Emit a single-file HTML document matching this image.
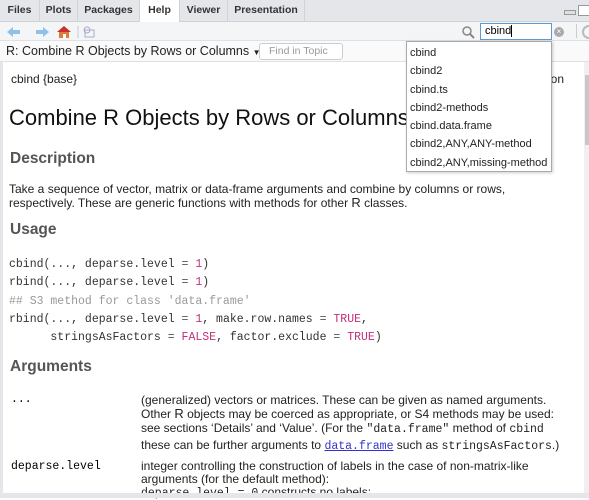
<!DOCTYPE html>
<html><head><meta charset="utf-8"><style>
*{margin:0;padding:0;box-sizing:border-box}
body{width:589px;height:498px;overflow:hidden;background:#fff;font-family:"Liberation Sans",sans-serif;position:relative;color:#000}
.a{position:absolute;white-space:nowrap}
.tabs{position:absolute;left:0;top:0;width:589px;height:22px;background:#e4e6e9;border-bottom:1px solid #cfd3d8}
.tab{position:absolute;top:0;height:22px;font-size:10.5px;font-weight:bold;line-height:21px;text-align:center;color:#333;border-right:1px solid #cfd3d8}
.tb{position:absolute;left:0;top:22px;width:589px;height:19px;background:#f4f5f7;border-bottom:1px solid #dde0e4}
.tt{position:absolute;left:0;top:41px;width:589px;height:21px;background:#fafafa;border-bottom:1px solid #dde0e4}
.m{font-family:"Liberation Mono",monospace;font-size:11.5px}
h3{position:absolute;left:10px;font-size:15.5px;color:#555;font-weight:bold}
.p{font-size:12px;line-height:14px;color:#222}
.n{color:#c0307a}.c{color:#999}.g{color:#555}
</style></head><body>
<div class="tabs">
<div class="tab" style="left:0;width:40px">Files</div>
<div class="tab" style="left:40px;width:38px">Plots</div>
<div class="tab" style="left:78px;width:62px">Packages</div>
<div class="tab" style="left:140px;width:40px;background:#fff;height:23px">Help</div>
<div class="tab" style="left:180px;width:48px">Viewer</div>
<div class="tab" style="left:228px;width:77px">Presentation</div>
<div class="a" style="left:564px;top:10px;width:12px;height:5px;border:1px solid #999;background:#e0e0e0"></div>
<div class="a" style="left:578px;top:5px;width:12px;height:11px;border:1px solid #999;background:#fff"></div>
</div>
<div class="tb">
<svg class="a" style="left:6px;top:3px" width="90" height="14">
<path d="M1 7 L7 2 L7 5 L14 5 L14 9 L7 9 L7 12Z" fill="#8fc1e8"/>
<path d="M43 7 L37 2 L37 5 L30 5 L30 9 L37 9 L37 12Z" fill="#8fc1e8"/>
<path d="M51 7 L58 1 L65 7 Z" fill="#c9302c"/><rect x="53" y="7" width="10" height="6" fill="#e27a3a"/><rect x="57" y="9" width="3" height="4" fill="#fff"/>
<line x1="72" y1="1" x2="72" y2="13" stroke="#ccc"/>
<rect x="79" y="5" width="9" height="7" fill="none" stroke="#aac"/><circle cx="81" cy="5" r="3" fill="none" stroke="#aac"/>
</svg>
<svg class="a" style="left:461px;top:3px" width="14" height="14"><circle cx="6" cy="6" r="4" fill="none" stroke="#888" stroke-width="1.5"/><line x1="9" y1="9" x2="13" y2="13" stroke="#888" stroke-width="2"/></svg>
<div class="a" style="left:480px;top:1px;width:72px;height:17px;border:1px solid #5b9bd5;background:#fff;font-size:11px;line-height:15px;padding-left:4px">cbind<span style="border-left:1px solid #000"></span></div>
<div class="a" style="left:554px;top:5px;width:10px;height:10px;border-radius:50%;background:#aaa;color:#fff;font-size:8px;line-height:10px;text-align:center">×</div>
<div class="a" style="left:576px;top:2px;width:1px;height:14px;background:#ccc"></div>
<div class="a" style="left:582px;top:3px;width:14px;height:14px;border-radius:50%;border:2px solid #bbb"></div>
</div>
<div class="tt">
<div class="a" style="left:6px;top:3px;font-size:12.5px;color:#222">R: Combine R Objects by Rows or Columns <span style="font-size:8px">▼</span></div>
<div class="a" style="left:259px;top:2px;width:84px;height:17px;border:1px solid #ccc;border-radius:3px;background:#fff;font-size:10.5px;color:#999;line-height:15px;padding-left:9px">Find in Topic</div>
</div>
<div class="a" style="left:0;top:62px;width:3px;height:432px;background:#e4e6e9"></div>
<div class="a" style="left:584px;top:62px;width:5px;height:432px;background:#f0f0f0"></div>
<div class="a" style="left:585px;top:75px;width:4px;height:70px;background:#c8c8c8"></div>
<div class="a p" style="left:11px;top:72px">cbind {base}</div>
<div class="a p" style="left:538px;top:72px">ation</div>
<div class="a" style="left:9px;top:105px;font-size:22px;color:#111">Combine R Objects by Rows or Columns</div>
<h3 style="top:150px">Description</h3>
<div class="a p" style="left:9px;top:182px">Take a sequence of vector, matrix or data-frame arguments and combine by columns or rows,<br>respectively. These are generic functions with methods for other <span style="font-size:13px">R</span> classes.</div>
<h3 style="top:221px">Usage</h3>
<div class="a m" style="left:9px;top:256px;line-height:18.3px;color:#333;white-space:pre">cbind(..., deparse.level <span class="g">=</span> <span class="n">1</span>)
rbind(..., deparse.level <span class="g">=</span> <span class="n">1</span>)
<span class="c">## S3 method for class 'data.frame'</span>
rbind(..., deparse.level <span class="g">=</span> <span class="n">1</span>, make.row.names <span class="g">=</span> <span class="n">TRUE</span>,
      stringsAsFactors <span class="g">=</span> <span class="n">FALSE</span>, factor.exclude <span class="g">=</span> <span class="n">TRUE</span>)</div>
<h3 style="top:358px">Arguments</h3>
<div class="a m" style="left:11px;top:393px">...</div>
<div class="a p" style="left:141px;top:393px;line-height:14.2px">(generalized) vectors or matrices. These can be given as named arguments.<br>Other <span style="font-size:13px">R</span> objects may be coerced as appropriate, or S4 methods may be used:<br>see sections ‘Details’ and ‘Value’. (For the <span class="m">"data.frame"</span> method of <span class="m">cbind</span><br>these can be further arguments to <span class="m" style="color:#33c;text-decoration:underline">data.frame</span> such as <span class="m">stringsAsFactors</span>.)</div>
<div class="a m" style="left:11px;top:460px">deparse.level</div>
<div class="a p" style="left:141px;top:460px;line-height:13px">integer controlling the construction of labels in the case of non-matrix-like<br>arguments (for the default method):<br><span class="m">deparse.level = 0</span> constructs no labels;</div>
<div class="a" style="left:0;top:493px;width:589px;height:5px;background:#e4e6e9"></div>
<div class="a" style="left:406px;top:41px;width:146px;height:131px;border:1px solid #aaa;background:#fff;box-shadow:1px 1px 3px rgba(0,0,0,.2);font-size:11px;color:#222;line-height:18.3px;padding:2px 0 0 3px">cbind<br>cbind2<br>cbind.ts<br>cbind2-methods<br>cbind.data.frame<br>cbind2,ANY,ANY-method<br>cbind2,ANY,missing-method</div>
</body></html>
